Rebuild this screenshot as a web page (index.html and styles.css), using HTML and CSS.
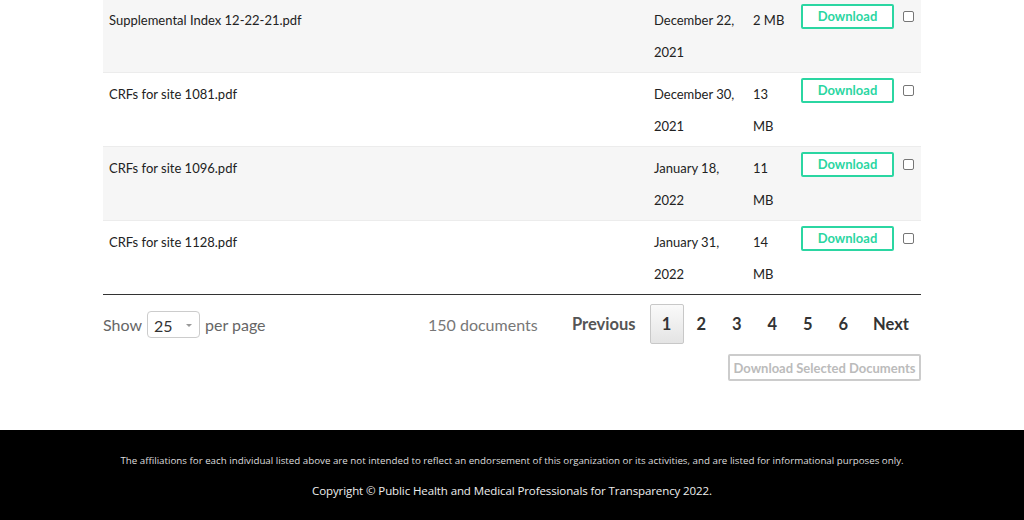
FILE: index.html
```html
<!DOCTYPE html>
<html lang="en">
<head>
  <meta charset="UTF-8" />
  <title>Documents</title>
  <link rel="stylesheet" href="styles.css">
</head>
<body>

  <!-- Daftar dokumen -->
  <div class="docs">
    <table class="doc-table">
      <tr class="odd">
        <td class="c-name">Supplemental Index 12-22-21.pdf</td>
        <td class="c-date">December 22, 2021</td>
        <td class="c-size">2 MB</td>
        <td class="c-dl"><a class="dl-btn" href="#">Download</a></td>
        <td class="c-check"><span class="check"></span></td>
      </tr>
      <tr>
        <td class="c-name">CRFs for site 1081.pdf</td>
        <td class="c-date">December 30, 2021</td>
        <td class="c-size">13 MB</td>
        <td class="c-dl"><a class="dl-btn" href="#">Download</a></td>
        <td class="c-check"><span class="check"></span></td>
      </tr>
      <tr class="odd">
        <td class="c-name">CRFs for site 1096.pdf</td>
        <td class="c-date">January 18, 2022</td>
        <td class="c-size">11 MB</td>
        <td class="c-dl"><a class="dl-btn" href="#">Download</a></td>
        <td class="c-check"><span class="check"></span></td>
      </tr>
      <tr>
        <td class="c-name">CRFs for site 1128.pdf</td>
        <td class="c-date">January 31, 2022</td>
        <td class="c-size">14 MB</td>
        <td class="c-dl"><a class="dl-btn" href="#">Download</a></td>
        <td class="c-check"><span class="check"></span></td>
      </tr>
    </table>

    <div class="pager-row">
      <div class="per-page">
        Show
        <span class="select">25 <span class="caret"></span></span>
        per page
      </div>
      <div class="count">150 documents</div>
      <div class="pager">
        <a class="prev" href="#">Previous</a>
        <a class="page active" href="#">1</a>
        <a class="page" href="#">2</a>
        <a class="page" href="#">3</a>
        <a class="page" href="#">4</a>
        <a class="page" href="#">5</a>
        <a class="page" href="#">6</a>
        <a class="next" href="#">Next</a>
      </div>
    </div>

    <div class="selected-row">
      <button class="sel-btn" disabled>Download Selected Documents</button>
    </div>
  </div>

  <!-- Footer -->
  <div class="footer">
    <p class="note">The affiliations for each individual listed above are not intended to reflect an endorsement of this organization or its activities, and are listed for informational purposes only.</p>
    <p class="copy">Copyright © Public Health and Medical Professionals for Transparency 2022.</p>
  </div>

</body>
</html>
```

FILE: styles.css
```css
* {
  box-sizing: border-box;
}

body {
  margin: 0;
  font-family: Lato, sans-serif;
  color: #222;
  background: #fff;
}

.docs {
  width: 818px;
  margin: -1px auto 0;
  height: 431px;
}

.doc-table {
  width: 100%;
  border-collapse: collapse;
  table-layout: fixed;
  border-bottom: 1px solid #333;
}

.doc-table tr {
  border-top: 1px solid #ececec;
}

.doc-table tr:first-child {
  border-top: none;
}

.doc-table tr.odd {
  background: #f6f6f6;
}

.doc-table td {
  vertical-align: top;
  padding: 5px 6px 4px;
  font-size: 13px;
  line-height: 32px;
  height: 73px;
}

.c-name { width: 545px; }
.c-date { width: 99px; }
.c-size { width: 48px; }
.c-dl { width: 102px; }
.c-check { width: 24px; }

.doc-table td.c-dl {
  padding: 5px 4px 0 6px;
  line-height: 1;
}

.dl-btn {
  display: block;
  width: 93px;
  height: 25px;
  border: 2px solid #2bd6a2;
  border-radius: 2px;
  color: #2bd6a2;
  font-weight: 700;
  font-size: 13px;
  text-align: center;
  line-height: 20px;
  text-decoration: none;
  background: #fff;
}

.doc-table td.c-check {
  padding: 12px 0 0 6px;
  line-height: 1;
}

.check {
  display: block;
  width: 11px;
  height: 11px;
  border: 1px solid #767676;
  border-radius: 2px;
  background: #fff;
}

.pager-row {
  display: flex;
  align-items: center;
  margin-top: 9px;
  height: 40px;
}

.per-page {
  display: flex;
  align-items: center;
  gap: 5px;
  font-size: 16px;
  color: #666;
  width: 325px;
}

.select {
  display: inline-flex;
  align-items: center;
  justify-content: space-between;
  width: 53px;
  height: 27px;
  padding: 2px 7px 0 6px;
  border: 1px solid #ccc;
  border-radius: 4px;
  color: #333;
  font-size: 16px;
}

.caret {
  width: 0;
  height: 0;
  border-left: 3px solid transparent;
  border-right: 3px solid transparent;
  border-top: 3px solid #999;
}

.count {
  font-size: 16px;
  color: #777;
  width: 144px;
}

.pager {
  display: flex;
  align-items: center;
  font-size: 16.5px;
  font-weight: 700;
}

.pager a {
  text-decoration: none;
  color: #333;
}

.prev {
  color: #555 !important;
  margin-right: 14px;
}

.page {
  display: inline-block;
  width: 35.5px;
  text-align: center;
  line-height: 39px;
}

.page.active {
  width: 34px;
  height: 40px;
  border: 1px solid #c8c8c8;
  border-radius: 2px;
  background: linear-gradient(#fafafa, #e4e4e4);
  margin-right: 0;
}

.next {
  margin-left: 12px;
}

.selected-row {
  display: flex;
  justify-content: flex-end;
  margin-top: 10px;
}

.sel-btn {
  font-family: Lato, sans-serif;
  font-size: 13px;
  font-weight: 700;
  color: #bbb;
  background: #fff;
  border: 2px solid #ccc;
  border-radius: 2px;
  width: 193px;
  height: 27px;
  padding: 0;
}

.footer {
  background: #000;
  height: 90px;
  text-align: center;
  font-family: "Open Sans", sans-serif;
  color: #eee;
  padding-top: 24px;
}

.footer p {
  margin: 0;
}

.note {
  font-size: 9.75px;
  color: #ddd;
}

.copy {
  font-size: 11.5px;
  margin-top: 16px !important;
  letter-spacing: -0.1px;
}
```
